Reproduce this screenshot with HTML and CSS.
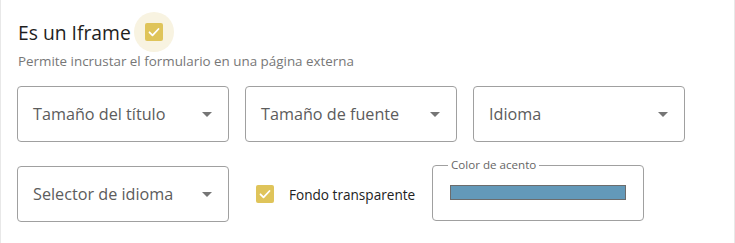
FILE: index.html
```html
<!DOCTYPE html>
<html lang="es">
<head>
<meta charset="utf-8">
<link rel="stylesheet" href="styles.css">
</head>
<body>
<div class="card">
  <div class="title-row">
    <span class="title">Es un Iframe</span>
    <span class="halo">
      <span class="check">
        <svg viewBox="0 0 18 18" width="18" height="18"><path d="M4.5 9.3l3 3 6-6.3" fill="none" stroke="#fff" stroke-width="1.8" stroke-linecap="round" stroke-linejoin="round"/></svg>
      </span>
    </span>
  </div>
  <p class="hint">Permite incrustar el formulario en una página externa</p>
  <div class="row">
    <div class="select"><span>Tamaño del título</span><i class="arrow"></i></div>
    <div class="select"><span>Tamaño de fuente</span><i class="arrow"></i></div>
    <div class="select"><span>Idioma</span><i class="arrow"></i></div>
  </div>
  <div class="row row2">
    <div class="select"><span>Selector de idioma</span><i class="arrow"></i></div>
    <label class="cb-label">
      <span class="check">
        <svg viewBox="0 0 18 18" width="18" height="18"><path d="M4.5 9.3l3 3 6-6.3" fill="none" stroke="#fff" stroke-width="1.8" stroke-linecap="round" stroke-linejoin="round"/></svg>
      </span>
      <span class="cb-text">Fondo transparente</span>
    </label>
    <fieldset class="color-field">
      <legend>Color de acento</legend>
      <div class="swatch"></div>
    </fieldset>
  </div>
</div>
</body>
</html>
```
FILE: styles.css
```css
html, body {
  margin: 0;
  padding: 0;
  background: #fff;
}
.card {
  box-sizing: border-box;
  width: 735px;
  height: 243px;
  border-left: 1px solid #e8e8e8;
  border-right: 1px solid #e8e8e8;
  padding: 12px 0 0 16px;
  font-family: "Open Sans", "Noto Sans", sans-serif;
}
.title-row {
  display: flex;
  align-items: center;
  height: 40px;
}
.title {
  font-size: 19.3px;
  color: #1e1e1e;
  margin-left: 1px;
}
.halo {
  width: 40px;
  height: 40px;
  border-radius: 50%;
  background: #f8f3e1;
  display: flex;
  align-items: center;
  justify-content: center;
  margin-left: 3px;
}
.check {
  width: 18px;
  height: 18px;
  border-radius: 2px;
  background: #dfc45a;
  display: flex;
  align-items: center;
  justify-content: center;
  flex: none;
}
.hint {
  margin: 0 0 0 1px;
  font-size: 13.4px;
  color: #777;
  line-height: 18px;
}
.row {
  display: flex;
  gap: 16px;
  margin-top: 16px;
}
.row2 {
  margin-top: 24px;
  align-items: flex-start;
  gap: 0;
}
.select {
  box-sizing: border-box;
  width: 212px;
  height: 56px;
  border: 1px solid #a0a0a0;
  border-radius: 4px;
  display: flex;
  align-items: center;
  justify-content: space-between;
  padding: 0 16px 0 15px;
  font-size: 16.2px;
  color: #5c5c5c;
}
.arrow {
  width: 0;
  height: 0;
  border-left: 5px solid transparent;
  border-right: 5px solid transparent;
  border-top: 5px solid #757575;
}
.cb-label {
  display: flex;
  align-items: center;
  gap: 15px;
  margin-left: 27px;
  width: 176px;
  height: 56px;
}
.cb-text {
  font-size: 13.6px;
  color: #222;
}
.color-field {
  box-sizing: border-box;
  width: 212px;
  min-width: 0;
  height: 63px;
  margin: -8px 0 0 0;
  border: 1px solid #a0a0a0;
  border-radius: 4px;
  padding: 0 0 0 17px;
}
.color-field legend {
  font-size: 11.6px;
  color: #666;
  padding: 0 3px;
  margin-left: -2px;
  line-height: 14px;
}
.swatch {
  box-sizing: border-box;
  width: 176px;
  height: 15px;
  background: #6399b9;
  border: 1px solid #6c6c6c;
  margin-top: 13px;
}
```
